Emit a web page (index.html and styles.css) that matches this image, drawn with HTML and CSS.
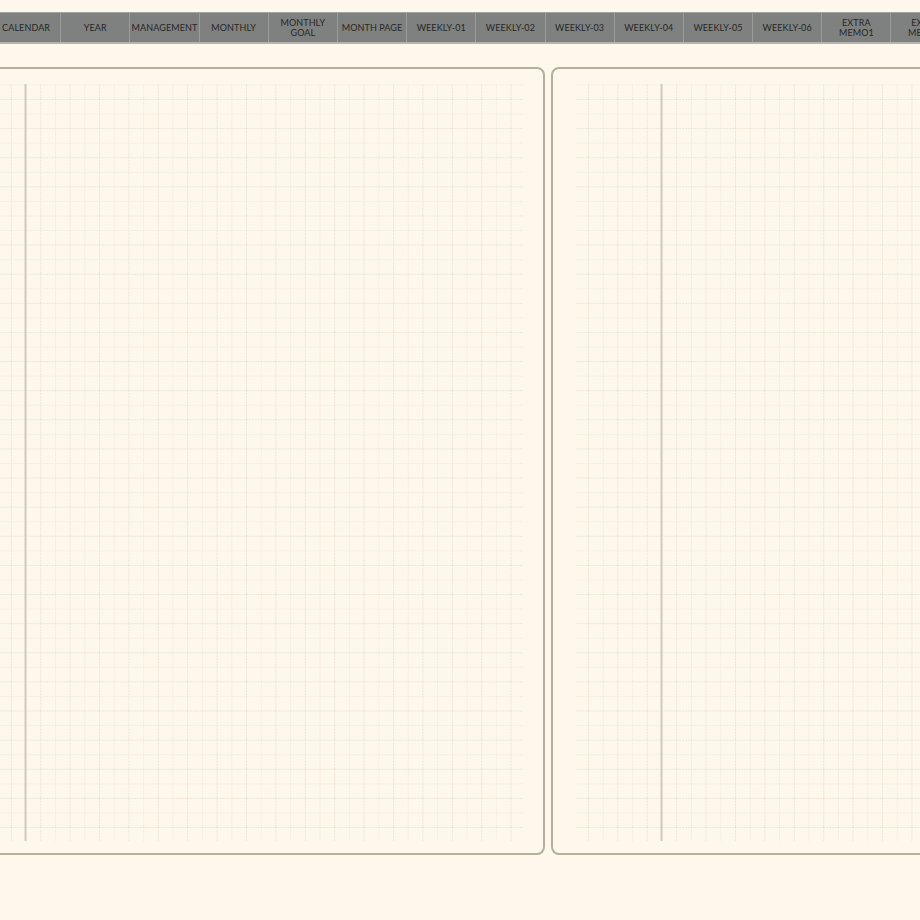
FILE: index.html
```html
<!DOCTYPE html>
<html>
	<head>
		<meta charset="utf-8">
		<title>Planner</title>
		<link rel="stylesheet" href="styles.css">
	</head>
	<body>
		<svg class="defs" width="0" height="0">
			<defs>
				<pattern id="cells" patternUnits="userSpaceOnUse" x="12" y="15" width="29.4" height="29.12">
					<line class="major" x1="0.5" y1="0" x2="0.5" y2="29.12" />
					<line class="minor" x1="15.2" y1="0" x2="15.2" y2="29.12" />
					<line class="major" x1="0" y1="0.5" x2="29.4" y2="0.5" />
					<line class="minor" x1="0" y1="15.06" x2="29.4" y2="15.06" />
				</pattern>
			</defs>
		</svg>

		<div class="tabs">
			<div class="tab">CALENDAR</div>
			<div class="tab">YEAR</div>
			<div class="tab">MANAGEMENT</div>
			<div class="tab">MONTHLY</div>
			<div class="tab">MONTHLY<br>GOAL</div>
			<div class="tab">MONTH PAGE</div>
			<div class="tab">WEEKLY-01</div>
			<div class="tab">WEEKLY-02</div>
			<div class="tab">WEEKLY-03</div>
			<div class="tab">WEEKLY-04</div>
			<div class="tab">WEEKLY-05</div>
			<div class="tab">WEEKLY-06</div>
			<div class="tab">EXTRA<br>MEMO1</div>
			<div class="tab">EXTRA<br>MEMO2</div>
		</div>

		<div class="spread">
			<div class="page">
				<svg class="grid">
					<rect width="100%" height="100%" fill="url(#cells)" />
					<rect class="margin-line" x="84.5" y="0" width="2" height="100%" />
				</svg>
			</div>
			<div class="page">
				<svg class="grid">
					<rect width="100%" height="100%" fill="url(#cells)" />
					<rect class="margin-line" x="84.5" y="0" width="2" height="100%" />
				</svg>
			</div>
		</div>
	</body>
</html>
```

FILE: styles.css
```css
* {margin:0; padding:0; box-sizing:border-box;}
html, body {background:#fef7eb;}
body {width:920px; height:920px; overflow:hidden; font-family:"Lato", "Liberation Sans", sans-serif;}

.defs {position:absolute;}

.tabs {display:flex; width:max-content; margin:12px 0 0 -8px; height:32px; background:#7e817f; border-top:1px solid #a2a4a0; border-bottom:2px solid #b4b5ae;}
.tab {flex-shrink:0; width:69.2px; display:flex; align-items:center; justify-content:center; text-align:center; border-right:1px solid #9a9c99; font-size:9px; line-height:10px; color:#262726; letter-spacing:0.1px;}

.spread {display:flex; gap:6px; margin:23px 0 0 -85px;}
.page {flex-shrink:0; width:630px; height:788px; border:2px solid #b3b19b; border-radius:8px; background:#fef7eb; padding:14.5px 20px 12px 23px;}
.grid {display:block; width:100%; height:100%;}

.major {stroke:#eee4d4; stroke-width:1; stroke-dasharray:2 1;}
.minor {stroke:#f4ebde; stroke-width:1; stroke-dasharray:2 1;}
.margin-line {fill:#cfcac2;}
```
